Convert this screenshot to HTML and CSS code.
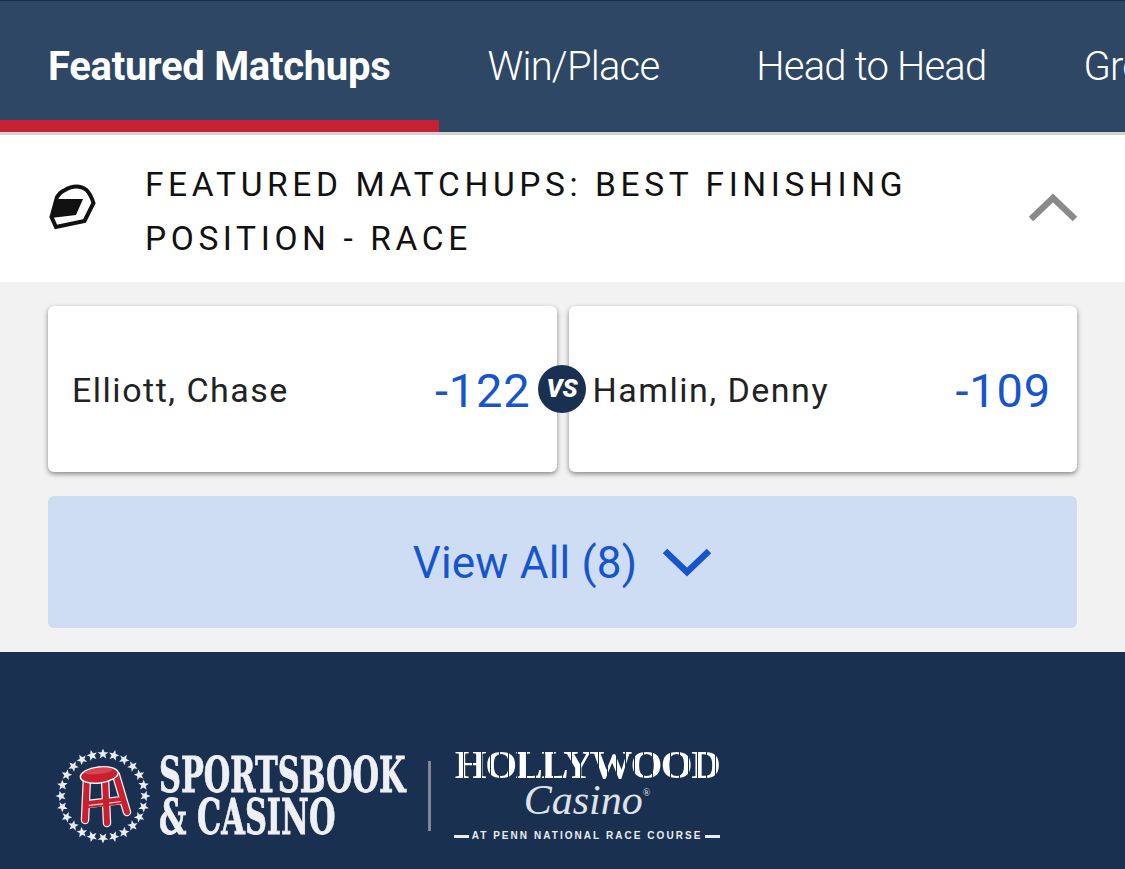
FILE: index.html
```html
<!DOCTYPE html>
<html lang="en">
<head>
<meta charset="utf-8">
<title>Featured Matchups</title>
<link rel="stylesheet" href="styles.css">
</head>
<body>
<nav class="tabs">
  <a class="tab active">Featured Matchups</a>
  <a class="tab">Win/Place</a>
  <a class="tab">Head to Head</a>
  <a class="tab">Group</a>
</nav>
<section class="head">
  <svg class="helmet" viewBox="0 0 50 50" width="52" height="50">
    <path d="M8 43 L3.5 33 L9 13 Q12 8 17 6 Q23 2.5 28 2.5 Q34 2.5 38.5 6 Q43 11 45.5 19 L36.5 37 Z" fill="none" stroke="#111" stroke-width="4" stroke-linejoin="miter"/>
    <path d="M8 15 L35 15 L28 31 L3 34 Z" fill="#111"/>
  </svg>
  <h2 class="title">FEATURED MATCHUPS: BEST FINISHING POSITION - RACE</h2>
  <svg class="chev" viewBox="0 0 50 30" width="50" height="30">
    <path d="M3 27 L25 6 L47 27" fill="none" stroke="#8a8a8a" stroke-width="6.5"/>
  </svg>
</section>
<main class="body">
  <div class="cards">
    <button class="card"><span class="name">Elliott, Chase</span><span class="odds">-122</span></button>
    <button class="card right"><span class="name">Hamlin, Denny</span><span class="odds">-109</span></button>
    <span class="vs">VS</span>
  </div>
  <button class="all">View All (8)
    <svg class="down" viewBox="0 0 50 30" width="50" height="30">
      <path d="M3 3 L25 24 L47 3" fill="none" stroke="#1655cc" stroke-width="6.5"/>
    </svg>
  </button>
</main>
<footer class="foot">
  <svg class="stool" viewBox="0 0 96 96" width="96" height="96">
    <defs><polygon id="s" points="0,-5.5 1.5,-1.8 5.3,-1.7 2.3,0.7 3.3,4.5 0,2.3 -3.3,4.5 -2.3,0.7 -5.3,-1.7 -1.5,-1.8" fill="#e9ecf0"/></defs>
    <g transform="translate(48 47)">
      <use href="#s" transform="rotate(0) translate(0 -42)"/>
      <use href="#s" transform="rotate(15) translate(0 -42)"/>
      <use href="#s" transform="rotate(30) translate(0 -42)"/>
      <use href="#s" transform="rotate(45) translate(0 -42)"/>
      <use href="#s" transform="rotate(60) translate(0 -42)"/>
      <use href="#s" transform="rotate(75) translate(0 -42)"/>
      <use href="#s" transform="rotate(90) translate(0 -42)"/>
      <use href="#s" transform="rotate(105) translate(0 -42)"/>
      <use href="#s" transform="rotate(120) translate(0 -42)"/>
      <use href="#s" transform="rotate(135) translate(0 -42)"/>
      <use href="#s" transform="rotate(150) translate(0 -42)"/>
      <use href="#s" transform="rotate(165) translate(0 -42)"/>
      <use href="#s" transform="rotate(180) translate(0 -42)"/>
      <use href="#s" transform="rotate(195) translate(0 -42)"/>
      <use href="#s" transform="rotate(210) translate(0 -42)"/>
      <use href="#s" transform="rotate(225) translate(0 -42)"/>
      <use href="#s" transform="rotate(240) translate(0 -42)"/>
      <use href="#s" transform="rotate(255) translate(0 -42)"/>
      <use href="#s" transform="rotate(270) translate(0 -42)"/>
      <use href="#s" transform="rotate(285) translate(0 -42)"/>
      <use href="#s" transform="rotate(300) translate(0 -42)"/>
      <use href="#s" transform="rotate(315) translate(0 -42)"/>
      <use href="#s" transform="rotate(330) translate(0 -42)"/>
      <use href="#s" transform="rotate(345) translate(0 -42)"/>
    </g>
    <g fill="none" stroke-linecap="round">
      <path d="M32 28 L30 71 M50 30 L52 74 M61 26 L72 63 M32 55 L68 51" stroke="#f4f4f4" stroke-width="8.5"/>
      <path d="M32 28 L30 71 M50 30 L52 74 M61 26 L72 63" stroke="#c8202f" stroke-width="6"/>
      <path d="M33 54 L67 50" stroke="#c8202f" stroke-width="4"/>
      <path d="M33 58 L52 56 M52 56 L66 54" stroke="#c8202f" stroke-width="2"/>
    </g>
    <g transform="rotate(-7 44 24)">
      <ellipse cx="44" cy="26" rx="19" ry="8" fill="#c8202f" stroke="#f4f4f4" stroke-width="1.5"/>
      <ellipse cx="44" cy="22" rx="14" ry="3" fill="#d8454f"/>
    </g>
  </svg>
  <div class="sb"><span class="sb-line">SPORTSBOOK</span><span class="sb-line">&amp; CASINO</span></div>
  <span class="rule"></span>
  <div class="hw">
    <span class="hw1">HOLLYWOOD</span>
    <span class="hw2">Casino<sup>®</sup></span>
    <span class="hw3"><i></i>AT PENN NATIONAL RACE COURSE<i></i></span>
  </div>
</footer>
</body>
</html>
```
FILE: styles.css
```css
* { box-sizing: border-box; }
html, body { margin: 0; padding: 0; }
body {
  width: 1125px; height: 869px; overflow: hidden;
  font-family: "Roboto", "Noto Sans", sans-serif;
  background: #f2f2f2;
  display: flex; flex-direction: column;
}
.tabs {
  display: flex; height: 135px; flex: none; overflow: hidden;
  background: #2d4765;
  border-top: 1px solid #1a3050;
  border-bottom: 3px solid #d2d2d2;
}
.tab {
  flex: none; padding: 0 49px 0 48px; height: 131px; line-height: 132px;
  color: #fff; font-size: 40px; font-weight: 300;
  letter-spacing: -0.8px;
}
.tab.active { font-weight: 700; letter-spacing: -0.3px; border-bottom: 12px solid #c52233; }
.head {
  flex: none; height: 147px; background: #fff;
  display: flex; align-items: center; padding: 0 47px;
}
.helmet { flex: none; width: 52px; height: 50px; }
.title {
  margin: 7px 0 0 46px; width: 820px; flex: none;
  font-size: 33.5px; font-weight: 400; line-height: 54px;
  color: #111; letter-spacing: 4.6px;
}
.chev { margin-left: auto; flex: none; margin-top: -4px; }
.body { flex: none; height: 370px; padding: 24px 48px; display: flex; flex-direction: column; gap: 24px; }
.cards { position: relative; display: flex; gap: 12px; height: 166px; }
.card {
  flex: 1; border: 0; background: #fff; border-radius: 6px;
  box-shadow: 0 2px 5px rgba(0,0,0,.45);
  display: flex; align-items: center; justify-content: space-between;
  padding: 2px 26px 0 24px; font-family: inherit;
}
.name { font-size: 34px; color: #222; letter-spacing: 1.5px; }
.odds { font-size: 47px; font-weight: 400; color: #1655cc; letter-spacing: 0.8px; }
.vs {
  position: absolute; left: 490px; top: 59px; width: 48px; height: 48px; border-radius: 50%;
  background: #1a3050; color: #fff; font-weight: 900; font-style: italic;
  font-size: 25px; line-height: 48px; text-align: center;
}
.all {
  height: 132px; border: 0; border-radius: 6px; background: #ceddf4; color: #1655cc;
  font-family: inherit; font-size: 44px; font-weight: 400; letter-spacing: 0.2px;
  display: flex; align-items: center; justify-content: center; gap: 25px; padding: 2px 0 0;
}
.foot {
  flex: 1; background: #1a3050; display: flex; align-items: flex-start;
  padding: 97px 0 0 55px;
}
.stool { flex: none; }
.sb {
  display: flex; flex-direction: column; flex: none; width: 245px; margin-left: 8px; margin-top: 5px;
  font-family: "DejaVu Serif", serif; font-stretch: condensed; font-weight: 700; font-size: 49px; line-height: 42px;
  color: #eef0f3; white-space: nowrap; -webkit-text-stroke: 0.8px #eef0f3;
}
.sb-line { display: block; transform: scaleX(.69); transform-origin: left center; }
.rule { width: 3px; height: 70px; background: #7f8894; margin: 12px 0 0 24px; flex: none; }
.hw { display: flex; flex-direction: column; align-items: center; margin-left: 23px; color: #fff; width: 266px; flex: none; }
.hw1 {
  font-family: "Liberation Serif", serif; font-weight: 700; font-size: 41px; line-height: 30px; letter-spacing: -1.6px; white-space: nowrap;
  background: repeating-linear-gradient(90deg, #fff 0 8px, #1a3050 8px 9px);
  -webkit-background-clip: text; background-clip: text; color: transparent;
}
.hw2 { font-family: "Liberation Serif", serif; font-style: italic; font-size: 42px; line-height: 44px; margin-top: -1px; color: #dfe3e8; }
.hw2 sup { font-size: 10px; font-style: normal; vertical-align: 18px; line-height: 0; }
.hw3 {
  display: flex; align-items: center; gap: 3px; margin-top: 7px; white-space: nowrap;
  font-family: "Liberation Sans", sans-serif; font-weight: 700; font-size: 10px; line-height: 14px; letter-spacing: 2.05px; color: #e9ecf0;
}
.hw3 i { display: block; width: 15px; height: 3px; background: #e9ecf0; }
```
